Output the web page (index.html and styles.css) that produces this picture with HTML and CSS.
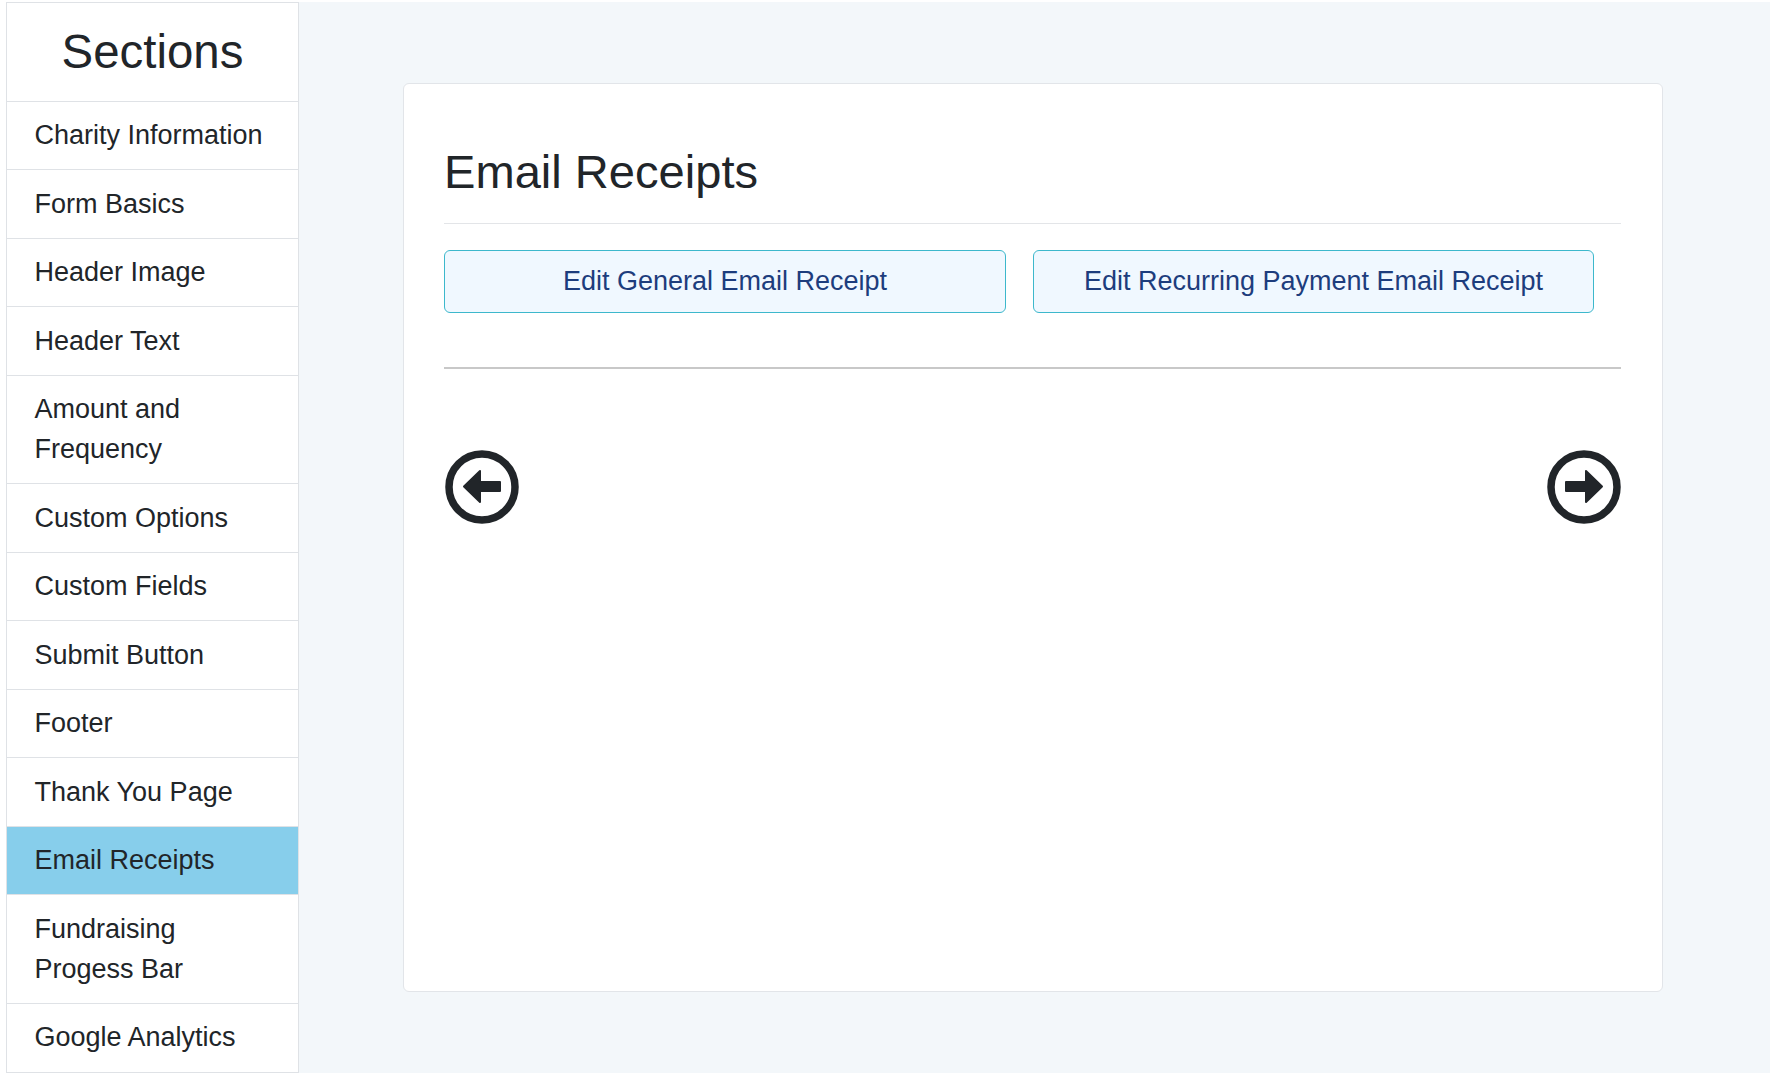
FILE: index.html
```html
<!DOCTYPE html>
<html lang="en">
<head>
  <meta charset="UTF-8">
  <meta name="viewport" content="width=device-width, initial-scale=1.0">
  <title>Email Receipts</title>
  <link rel="stylesheet" href="styles.css">
</head>
<body>
  <div class="page">
    <nav class="sidebar">
      <h2 class="sidebar-title">Sections</h2>
      <a class="section-link">Charity Information</a>
      <a class="section-link">Form Basics</a>
      <a class="section-link">Header Image</a>
      <a class="section-link">Header Text</a>
      <a class="section-link">Amount and Frequency</a>
      <a class="section-link">Custom Options</a>
      <a class="section-link">Custom Fields</a>
      <a class="section-link">Submit Button</a>
      <a class="section-link">Footer</a>
      <a class="section-link">Thank You Page</a>
      <a class="section-link active">Email Receipts</a>
      <a class="section-link">Fundraising Progess Bar</a>
      <a class="section-link">Google Analytics</a>
    </nav>

    <main class="content">
      <section class="card">
        <h1 class="card-title">Email Receipts</h1>
        <div class="receipt-buttons">
          <button class="receipt-btn">Edit General Email Receipt</button>
          <button class="receipt-btn">Edit Recurring Payment Email Receipt</button>
        </div>
        <hr class="divider">
        <div class="pager">
          <svg class="pager-icon" viewBox="0 0 74 74" aria-label="Previous">
            <circle class="ring" cx="37" cy="37" r="33"/>
            <path class="arrow" d="M19 36.500 L35 21 V32 H55 V41 H35 V52 Z"/>
          </svg>
          <svg class="pager-icon" viewBox="0 0 74 74" aria-label="Next">
            <circle class="ring" cx="37" cy="37" r="33"/>
            <path class="arrow" d="M55 36.500 L39 21 V32 H19 V41 H39 V52 Z"/>
          </svg>
        </div>
      </section>
    </main>
  </div>
</body>
</html>
```

FILE: styles.css
```css
* {
  margin: 0;
  padding: 0;
  box-sizing: border-box;
}

body {
  background: #fff;
  color: #212529;
  font-family: "Liberation Sans", Arial, sans-serif;
}

.page {
  display: flex;
  padding: 2px 0 2px 6px;
}

/* Sidebar */
.sidebar {
  width: 293px;
  flex-shrink: 0;
  display: flex;
  flex-direction: column;
  background: #fff;
  border: 1px solid #dfe2e6;
  border-bottom: 0;
}

.sidebar-title {
  height: 98.700px;
  border-bottom: 1px solid #dfe2e6;
  font-size: 47.400px;
  font-weight: 400;
  line-height: 97px;
  text-align: center;
}

.section-link {
  display: block;
  padding: 13.750px 20px 13.750px 27.500px;
  border-bottom: 1px solid #dfe2e6;
  font-size: 27px;
  line-height: 40px;
}

.section-link:last-child {
  padding-bottom: 14.500px;
}

.section-link.active {
  background: #87ceeb;
}

/* Main area */
.content {
  flex: 1;
  padding: 81px 107px 81px 104px;
  background: #f3f7fa;
}

.card {
  height: 100%;
  padding: 0 41px 0 40px;
  background: #fff;
  border: 1px solid #e2e5e9;
  border-radius: 6px;
}

.card-title {
  margin-top: 54px;
  padding-bottom: 17px;
  border-bottom: 1px solid #e3e5e8;
  font-size: 47.100px;
  font-weight: 400;
  line-height: 68px;
}

.receipt-buttons {
  display: flex;
  gap: 27px;
  margin-top: 26px;
}

.receipt-btn {
  width: 562px;
  height: 63px;
  background: #f0f8ff;
  border: 1px solid #3db8cc;
  border-radius: 6px;
  color: #1d3d7d;
  font-family: inherit;
  font-size: 27px;
}

.receipt-btn:last-child {
  width: 561px;
}

.divider {
  height: 2px;
  margin-top: 54px;
  background: #c8c8c8;
  border: 0;
}

.pager {
  display: flex;
  justify-content: space-between;
  margin-top: 81px;
  padding: 0 0 0 1px;
}

.pager-icon {
  width: 74px;
  height: 74px;
}

.ring {
  fill: none;
  stroke: #212529;
  stroke-width: 7.500;
}

.arrow {
  fill: #212529;
  stroke: #212529;
  stroke-width: 2;
  stroke-linejoin: round;
}
```
